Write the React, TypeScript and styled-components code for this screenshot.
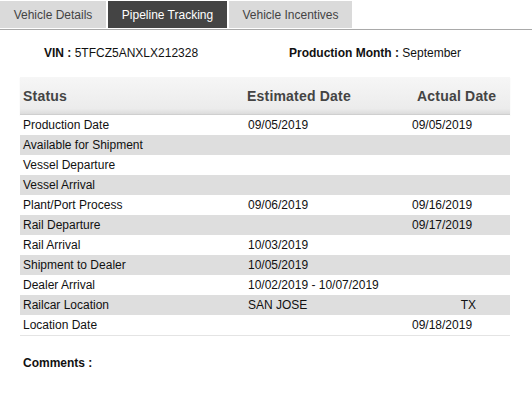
import React from "react";
import styled, { createGlobalStyle } from "styled-components";

const GlobalStyle = createGlobalStyle`
  html, body {
    margin: 0;
    padding: 0;
    background: #ffffff;
  }
  body {
    font-family: "Liberation Sans", Arial, sans-serif;
    font-size: 12px;
    color: #111;
    -webkit-font-smoothing: none;
  }
`;

const Page = styled.div`
  width: 532px;
  height: 402px;
  overflow: hidden;
`;

const TabBar = styled.div`
  display: flex;
  gap: 2px;
  padding-top: 1px;
  border-bottom: 1px solid #a9a9a9;
  height: 28px;
`;

const Tab = styled.div<{ $active?: boolean; $w: number }>`
  display: flex;
  align-items: center;
  justify-content: center;
  width: ${(p) => p.$w}px;
  height: 27px;
  background: ${(p) => (p.$active ? "#444444" : "#dadada")};
  color: ${(p) => (p.$active ? "#ffffff" : "#444444")};
  font-size: 12px;
  white-space: nowrap;
`;

const InfoRow = styled.div`
  display: grid;
  grid-template-columns: 245px 1fr;
  padding: 14px 0 0 44px;
  height: 18px;
  line-height: 18px;
`;

const Field = styled.div`
  white-space: nowrap;
`;

const Label = styled.span`
  font-weight: bold;
`;

const Table = styled.div`
  margin: 15px 22px 0 20px;
  border-bottom: 1px solid #e4e4e4;
`;

const HeaderRow = styled.div`
  display: grid;
  grid-template-columns: 224px 170px 1fr;
  height: 37px;
  align-items: center;
  padding-left: 3px;
  background: linear-gradient(#f6f6f6, #ececec 85%, #dcdcdc);
  border-bottom: 1px solid #cfcfcf;
  box-shadow: 0 1px 1px #ececec;
  color: #444444;
  font-weight: bold;
  font-size: 14px;
  letter-spacing: 0.2px;
`;

const Row = styled.div<{ $shaded?: boolean }>`
  display: grid;
  grid-template-columns: 225px 164px 1fr;
  height: 20px;
  align-items: center;
  padding-left: 3px;
  background: ${(p) => (p.$shaded ? "#dedede" : "#ffffff")};
  font-size: 12px;
  color: #111;
`;

const Cell = styled.div`
  white-space: nowrap;
`;

const StateCell = styled.div`
  display: flex;
  justify-content: flex-end;
  padding-right: 34px;
`;

const Comments = styled.div`
  padding: 20px 0 0 23px;
  font-weight: bold;
  font-size: 12px;
`;

type Stop = { status: string; est?: string; actual?: string; state?: string };

const stops: Stop[] = [
  { status: "Production Date", est: "09/05/2019", actual: "09/05/2019" },
  { status: "Available for Shipment" },
  { status: "Vessel Departure" },
  { status: "Vessel Arrival" },
  { status: "Plant/Port Process", est: "09/06/2019", actual: "09/16/2019" },
  { status: "Rail Departure", actual: "09/17/2019" },
  { status: "Rail Arrival", est: "10/03/2019" },
  { status: "Shipment to Dealer", est: "10/05/2019" },
  { status: "Dealer Arrival", est: "10/02/2019 - 10/07/2019" },
  { status: "Railcar Location", est: "SAN JOSE", state: "TX" },
  { status: "Location Date", actual: "09/18/2019" },
];

export default function App() {
  return (
    <Page>
      <GlobalStyle />
      <TabBar>
        <Tab $w={106}>Vehicle Details</Tab>
        <Tab $w={119} $active>
          Pipeline Tracking
        </Tab>
        <Tab $w={123}>Vehicle Incentives</Tab>
      </TabBar>
      <InfoRow>
        <Field>
          <Label>VIN :</Label> 5TFCZ5ANXLX212328
        </Field>
        <Field>
          <Label>Production Month :</Label> September
        </Field>
      </InfoRow>
      <Table>
        <HeaderRow>
          <Cell>Status</Cell>
          <Cell>Estimated Date</Cell>
          <Cell>Actual Date</Cell>
        </HeaderRow>
        {stops.map((s, i) => (
          <Row key={s.status} $shaded={i % 2 === 1}>
            <Cell>{s.status}</Cell>
            <Cell>{s.est ?? ""}</Cell>
            {s.state ? <StateCell>{s.state}</StateCell> : <Cell>{s.actual ?? ""}</Cell>}
          </Row>
        ))}
      </Table>
      <Comments>Comments :</Comments>
    </Page>
  );
}
